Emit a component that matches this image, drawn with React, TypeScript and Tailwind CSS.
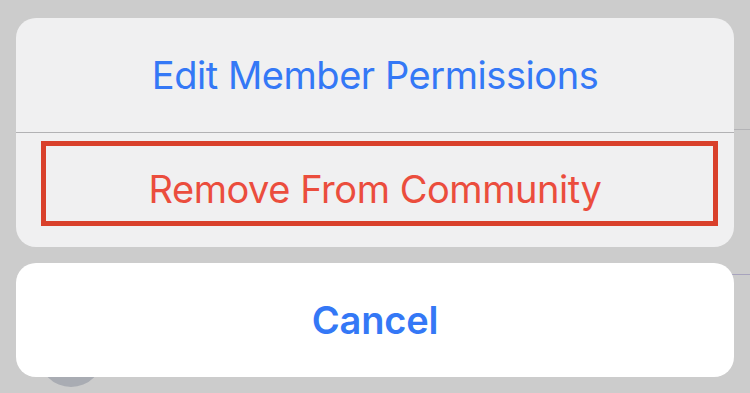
const FONT = "font-['Inter','Noto_Sans',sans-serif]";

function Label({ label, color, bold }: { label: string; color: string; bold?: boolean }) {
  return (
    <span className={`text-[38px] leading-none ${color} ${bold ? "font-semibold tracking-[-0.2px]" : "font-normal tracking-[-0.45px]"}`}>
      {label}
    </span>
  );
}

export default function App() {
  return (
    <div className={`relative w-[750px] h-[393px] overflow-hidden bg-[#cccccc] ${FONT}`}>
      {/* list behind the sheet */}
      <div className="absolute left-[39px] top-[323px] w-[64px] h-[64px] rounded-full bg-[#a9acb3]" />
      <div className="absolute left-[110px] right-0 top-[129px] h-px bg-[#b3b3b6]" />
      <div className="absolute left-[110px] right-0 top-[274px] h-px bg-[#a7a3bd]" />

      <div className="relative flex flex-col gap-4 px-4 pt-[18px]">
        <div className="rounded-[20px] bg-[#f0f0f1] overflow-hidden">
          <div className="h-[114px] flex items-center justify-center">
            <Label label="Edit Member Permissions" color="text-[#3478f6]" />
          </div>
          <div className="h-px bg-[#b2b2b4]" />
          <div className="h-[114px] pt-[8px] pb-[21px] pl-[25px] pr-[16px] flex">
            <div className="flex-1 border-[5px] border-[#d9402b] flex items-center justify-center pt-[11px] pr-[9px]">
              <Label label="Remove From Community" color="text-[#eb4d3d]" />
            </div>
          </div>
        </div>
        <div className="h-[114px] rounded-[20px] bg-white flex items-center justify-center">
          <Label label="Cancel" color="text-[#3478f6]" bold />
        </div>
      </div>
    </div>
  );
}
